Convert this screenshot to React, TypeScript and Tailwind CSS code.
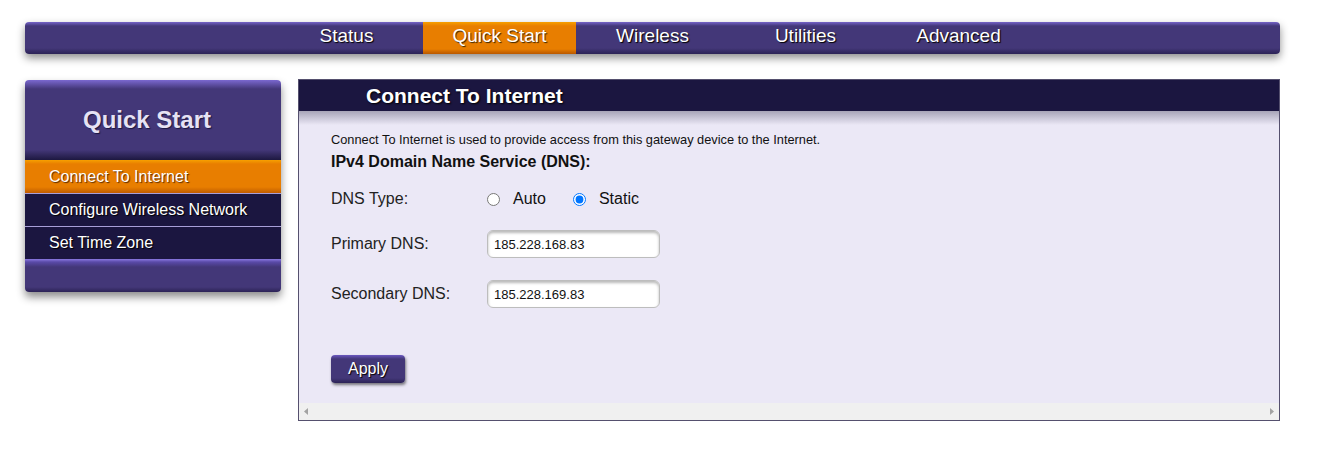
import { useState } from "react";

const tabs = ["Status", "Quick Start", "Wireless", "Utilities", "Advanced"];
const sideItems = ["Connect To Internet", "Configure Wireless Network", "Set Time Zone"];

export default function App() {
    const [dnsType, setDnsType] = useState<"auto" | "static">("static");
    const [primary, setPrimary] = useState("185.228.168.83");
    const [secondary, setSecondary] = useState("185.228.169.83");

    return (
        <div className="w-[1319px] h-[471px] bg-white font-['Liberation_Sans',Arial,sans-serif] text-[#111] overflow-hidden">
            {/* top navigation */}
            <div className="pt-[22px] pl-[25px]">
                <div className="w-[1255px] h-[32px] rounded-[4px] bg-[linear-gradient(#7563c8_0px,#433778_4px,#433778_26px,#2c2356_32px)] shadow-[0_4px_8px_rgba(0,0,0,0.45)] flex pl-[245px]">
                    {tabs.map((t) => (
                        <div
                            key={t}
                            className={
                                t === "Quick Start"
                                    ? "w-[153px] h-full flex items-center justify-center pb-[3px] text-[19px] text-white text-shadow-[1px_1px_1px_#3a2400] bg-[linear-gradient(#f7a000_0px,#e87e00_4px,#e87e00_27px,#b95800_32px)]"
                                    : "w-[153px] h-full flex items-center justify-center pb-[3px] text-[19px] text-white text-shadow-[1px_1px_1px_#000]"
                            }
                        >
                            {t}
                        </div>
                    ))}
                </div>
            </div>

            <div className="flex pl-[25px] mt-[25px] gap-[17px]">
                {/* side menu */}
                <div className="w-[256px] mt-[1px] rounded-[4px] overflow-hidden shadow-[0_5px_8px_rgba(0,0,0,0.45)] self-start">
                    <div className="h-[80px] flex items-center justify-center pr-[12px] bg-[linear-gradient(#7b68d0_0px,#433778_9px,#433778_70px,#1d1840_80px)]">
                        <span className="text-[24px] font-bold text-[#e6e2f4] text-shadow-[1px_1px_1px_#1b1640]">Quick Start</span>
                    </div>
                    {sideItems.map((s, i) => (
                        <div
                            key={s}
                            className={
                                i === 0
                                    ? "h-[33px] flex items-center pl-[24px] text-[16px] text-white text-shadow-[1px_1px_1px_#5a2a00] bg-[linear-gradient(#f7a000_0px,#e87e00_4px,#e87e00_27px,#c05c00_33px)]"
                                    : "h-[33px] flex items-center pl-[24px] text-[16px] text-white text-shadow-[1px_1px_1px_#000] bg-[#1b1640] border-t border-[#a89fd8]"
                            }
                        >
                            {s}
                        </div>
                    ))}
                    <div className="h-[33px] bg-[linear-gradient(#8a78e0_0px,#5a4aa8_3px,#433778_8px,#433778_28px,#2c2356_33px)]" />
                </div>

                {/* main panel */}
                <div className="w-[982px] h-[342px] border border-[#55506e] bg-[#ebe8f6] flex flex-col">
                    <div className="h-[31px] bg-[#1b1640] flex items-center pl-[67px] shrink-0">
                        <span className="text-[21px] font-bold text-white text-shadow-[1px_1px_2px_#000]">Connect To Internet</span>
                    </div>
                    <div className="h-[14px] bg-[linear-gradient(#a7a4b8,#ebe8f6)] shrink-0" />
                    <div className="flex-1 pl-[32px] pt-[7px]">
                        <p className="text-[12.8px] leading-[15px]">Connect To Internet is used to provide access from this gateway device to the Internet.</p>
                        <p className="text-[16px] leading-[18px] font-bold mt-[6px]">IPv4 Domain Name Service (DNS):</p>

                        <div className="flex items-center mt-[17px] h-[22px] text-[16px]">
                            <span className="w-[156px] text-[#222]">DNS Type:</span>
                            <label className="flex items-center">
                                <input
                                    type="radio"
                                    name="dns"
                                    checked={dnsType === "auto"}
                                    onChange={() => setDnsType("auto")}
                                    className="w-[13px] h-[13px] mr-[13px] accent-[#0075ff]"
                                />
                                <span>Auto</span>
                            </label>
                            <label className="flex items-center ml-[27px]">
                                <input
                                    type="radio"
                                    name="dns"
                                    checked={dnsType === "static"}
                                    onChange={() => setDnsType("static")}
                                    className="w-[13px] h-[13px] mr-[13px] accent-[#0075ff]"
                                />
                                <span>Static</span>
                            </label>
                        </div>

                        <div className="flex items-center mt-[20px] text-[16px]">
                            <span className="w-[156px] text-[#222]">Primary DNS:</span>
                            <input
                                value={primary}
                                onChange={(e) => setPrimary(e.target.value)}
                                className="w-[173px] h-[28px] rounded-[6px] border border-[#bdbdbd] bg-white pl-[6px] text-[13px] text-[#111] shadow-[inset_0_2px_3px_rgba(0,0,0,0.28)] outline-none"
                            />
                        </div>

                        <div className="flex items-center mt-[22px] text-[16px]">
                            <span className="w-[156px] text-[#222]">Secondary DNS:</span>
                            <input
                                value={secondary}
                                onChange={(e) => setSecondary(e.target.value)}
                                className="w-[173px] h-[28px] rounded-[6px] border border-[#bdbdbd] bg-white pl-[6px] text-[13px] text-[#111] shadow-[inset_0_2px_3px_rgba(0,0,0,0.28)] outline-none"
                            />
                        </div>

                        <button className="mt-[47px] w-[74px] h-[28px] rounded-[4px] text-[16px] text-white text-shadow-[1px_1px_1px_#000] bg-[linear-gradient(#6a58c0_0px,#433778_4px,#433778_23px,#2c2356_28px)] shadow-[1px_2px_3px_rgba(0,0,0,0.5)]">
                            Apply
                        </button>
                    </div>
                    <div className="h-[17px] bg-[#f0f0f0] flex items-center justify-between px-[5px] shrink-0">
                        <svg width="4" height="7" viewBox="0 0 4 7"><path d="M4 0 L0 3.5 L4 7 Z" fill="#a3a3a3" /></svg>
                        <svg width="4" height="7" viewBox="0 0 4 7"><path d="M0 0 L4 3.5 L0 7 Z" fill="#a3a3a3" /></svg>
                    </div>
                </div>
            </div>
        </div>
    );
}
